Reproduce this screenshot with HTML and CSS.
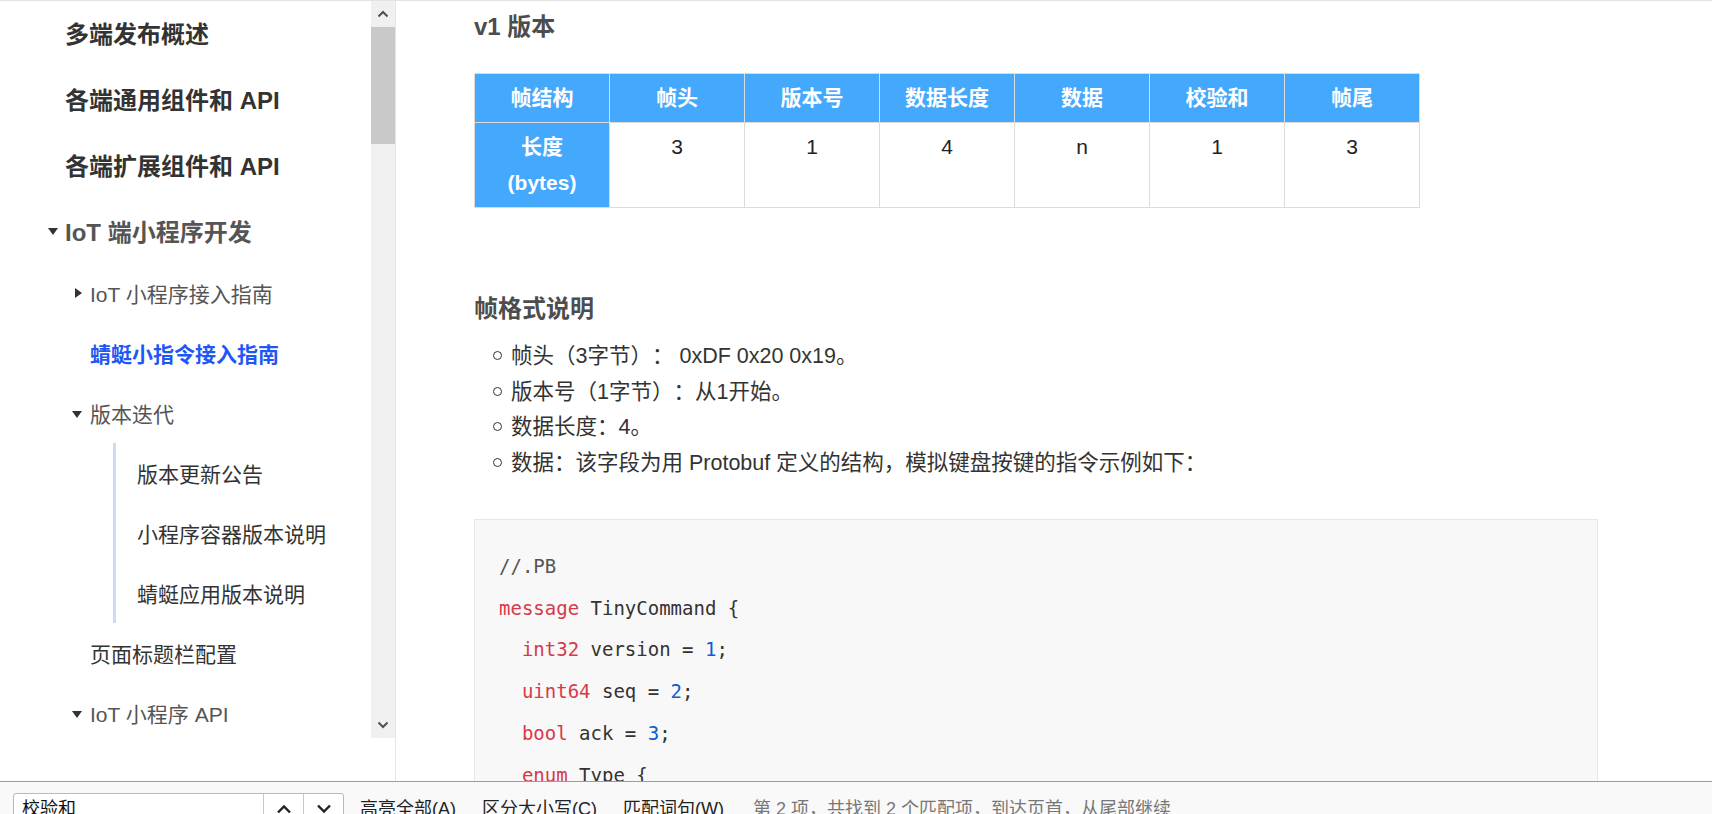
FILE: index.html
```html
<!DOCTYPE html>
<html lang="zh-CN">
<head>
<meta charset="utf-8">
<title>蜻蜓小指令接入指南</title>
<link rel="stylesheet" href="styles.css">
</head>
<body>
<div class="page">
  <div class="main">
    <aside class="sidebar">
      <div class="side-scroll">
        <nav class="nav">
          <div class="row l1"><span class="slot"></span><span class="t">多端发布概述</span></div>
          <div class="row l1"><span class="slot"></span><span class="t">各端通用组件和 API</span></div>
          <div class="row l1"><span class="slot"></span><span class="t">各端扩展组件和 API</span></div>
          <div class="row l1 open"><span class="slot"><i class="tri-down"></i></span><span class="t">IoT 端小程序开发</span></div>
          <div class="row l2"><span class="slot"><i class="tri-right"></i></span><span class="t">IoT 小程序接入指南</span></div>
          <div class="row l2 active"><span class="slot"></span><span class="t">蜻蜓小指令接入指南</span></div>
          <div class="row l2"><span class="slot"><i class="tri-down"></i></span><span class="t">版本迭代</span></div>
          <div class="group">
            <div class="row l3"><span class="t">版本更新公告</span></div>
            <div class="row l3"><span class="t">小程序容器版本说明</span></div>
            <div class="row l3"><span class="t">蜻蜓应用版本说明</span></div>
          </div>
          <div class="row l2 dark"><span class="slot"></span><span class="t">页面标题栏配置</span></div>
          <div class="row l2"><span class="slot"><i class="tri-down"></i></span><span class="t">IoT 小程序 API</span></div>
          <div class="row l2"><span class="slot"></span><span class="t">IoT 小程序组件</span></div>
        </nav>
        <div class="scrollbar">
          <div class="sb-btn">
            <svg width="12" height="8" viewBox="0 0 12 8"><polyline points="1.5,6.5 6,2 10.5,6.5" fill="none" stroke="#505050" stroke-width="2"/></svg>
          </div>
          <div class="sb-thumb"></div>
          <div class="sb-track"></div>
          <div class="sb-btn">
            <svg width="12" height="8" viewBox="0 0 12 8"><polyline points="1.5,1.5 6,6 10.5,1.5" fill="none" stroke="#505050" stroke-width="2"/></svg>
          </div>
        </div>
      </div>
    </aside>
    <main class="content">
      <h3 class="h3">v1 版本</h3>
      <table class="frame">
        <thead>
          <tr><th>帧结构</th><th>帧头</th><th>版本号</th><th>数据长度</th><th>数据</th><th>校验和</th><th>帧尾</th></tr>
        </thead>
        <tbody>
          <tr><th>长度<br>(bytes)</th><td>3</td><td>1</td><td>4</td><td>n</td><td>1</td><td>3</td></tr>
        </tbody>
      </table>
      <h3 class="h3 h3-second">帧格式说明</h3>
      <ul class="list">
        <li>帧头（3字节）： 0xDF 0x20 0x19。</li>
        <li>版本号（1字节）：从1开始。</li>
        <li>数据长度：4。</li>
        <li>数据：该字段为用 Protobuf 定义的结构，模拟键盘按键的指令示例如下：</li>
      </ul>
      <pre class="code"><code><span class="c">//.PB</span>
<span class="k">message</span> TinyCommand {
  <span class="k">int32</span> version = <span class="n">1</span>;
  <span class="k">uint64</span> seq = <span class="n">2</span>;
  <span class="k">bool</span> ack = <span class="n">3</span>;
  <span class="k">enum</span> Type {
    KEY = <span class="n">0</span>;
  }
}</code></pre>
    </main>
  </div>
  <div class="findbar">
    <div class="fb-input">
      <span class="fb-text">校验和</span>
      <span class="fb-btn">
        <svg width="16" height="10" viewBox="0 0 16 10"><polyline points="2,8.5 8,2.5 14,8.5" fill="none" stroke="#222" stroke-width="2.4"/></svg>
      </span>
      <span class="fb-btn">
        <svg width="16" height="10" viewBox="0 0 16 10"><polyline points="2,1.5 8,7.5 14,1.5" fill="none" stroke="#222" stroke-width="2.4"/></svg>
      </span>
    </div>
    <span class="fb-label first">高亮全部(A)</span>
    <span class="fb-label">区分大小写(C)</span>
    <span class="fb-label">匹配词句(W)</span>
    <span class="fb-msg">第 2 项，共找到 2 个匹配项，到达页首，从尾部继续</span>
  </div>
</div>
</body>
</html>
```

FILE: styles.css
```css
* { box-sizing: border-box; }
html, body { margin: 0; padding: 0; }
body {
  width: 1712px;
  height: 814px;
  overflow: hidden;
  background: #fff;
  font-family: "Liberation Sans", "Noto Sans CJK SC", sans-serif;
  color: #333;
  text-spacing-trim: space-all;
}
.page {
  height: 814px;
  display: flex;
  flex-direction: column;
  border-top: 1px solid #e3e3e3;
}
.main {
  height: 780px;
  display: flex;
  overflow: hidden;
}

/* sidebar */
.sidebar {
  width: 396px;
  flex: none;
  border-right: 1px solid #e6e6e6;
}
.side-scroll {
  height: 737px;
  display: flex;
  overflow: hidden;
}
.nav {
  flex: 1;
  overflow: hidden;
  margin-top: -2px;
}
.row {
  display: flex;
  align-items: center;
  white-space: nowrap;
}
.slot {
  width: 17px;
  flex: none;
  display: flex;
  align-items: center;
}
.row.l1 {
  height: 66px;
  padding-left: 48px;
  font-size: 24px;
  font-weight: bold;
  color: #333;
}
.row.l1.open { color: #555; }
.row.l2 {
  height: 60px;
  padding-left: 72px;
  font-size: 21px;
  color: #555;
}
.row.l2 .slot { width: 18px; }
.row.l2.dark { color: #333; }
.row.l2.active {
  color: #1e57f5;
  font-weight: bold;
}
.group {
  margin-left: 113px;
  border-left: 3px solid #c8ddf5;
}
.row.l3 {
  height: 60px;
  padding-left: 21px;
  font-size: 21px;
  color: #333;
}
.tri-down {
  display: block;
  width: 0; height: 0;
  border-left: 5px solid transparent;
  border-right: 5px solid transparent;
  border-top: 7px solid #333;
  margin-top: 3px;
}
.tri-right {
  display: block;
  width: 0; height: 0;
  border-top: 5px solid transparent;
  border-bottom: 5px solid transparent;
  border-left: 7px solid #333;
  margin-left: 3px;
}

.scrollbar {
  width: 24px;
  flex: none;
  background: #f0f0f0;
  display: flex;
  flex-direction: column;
}
.sb-btn {
  height: 26px;
  display: flex;
  align-items: center;
  justify-content: center;
}
.sb-thumb {
  height: 117px;
  background: #c9c9c9;
}
.sb-track { flex: 1; }

/* content */
.content {
  flex: 1;
  overflow: hidden;
  padding: 11px 114px 0 78px;
}
.h3 {
  margin: 0;
  font-size: 24px;
  line-height: 30px;
  font-weight: bold;
  color: #4d4d4d;
}
.h3-second { margin-top: 86px; }

.frame {
  margin-top: 31px;
  border-collapse: collapse;
  table-layout: fixed;
  width: 946px;
  font-size: 21px;
}
.frame th, .frame td {
  width: 135px;
  border: 1px solid #dcdcdc;
  padding: 6px 4px;
  line-height: 36px;
  text-align: center;
  vertical-align: top;
}
.frame th {
  background: #44a8fd;
  color: #fff;
  font-weight: bold;
}
.frame td {
  color: #222;
  background: #fff;
}

.list {
  margin: 15px 0 0;
  padding-left: 35px;
  list-style: none;
  font-size: 21.5px;
  line-height: 35.5px;
  color: #333;
}
.list li::before {
  content: "";
  display: inline-block;
  width: 7px;
  height: 7px;
  border: 1px solid #333;
  border-radius: 50%;
  margin-left: -16px;
  margin-right: 9px;
  vertical-align: 3px;
}

.code {
  margin: 38px 0 0;
  background: #f8f8f8;
  border: 1px solid #e6e6e6;
  padding: 26px 24px;
  font-family: "DejaVu Sans Mono", "Liberation Mono", monospace;
  font-size: 19px;
  line-height: 41.7px;
  color: #333;
  width: 1124px;
}
.code .k { color: #d73a49; }
.code .n { color: #0b5cd5; }
.code .c { color: #555; }

/* find bar */
.findbar {
  height: 33px;
  flex: none;
  border-top: 1px solid #9c9c9c;
  background: #f9f9f9;
  display: flex;
  align-items: flex-start;
  padding: 11px 0 0 13px;
  overflow: hidden;
  white-space: nowrap;
  font-size: 18px;
  text-spacing-trim: normal;
}
.fb-input {
  width: 331px;
  height: 32px;
  flex: none;
  display: flex;
  background: #fff;
  border: 1px solid #b8b8b8;
  border-radius: 3px;
}
.fb-text {
  width: 249px;
  padding-left: 8px;
  line-height: 30px;
  color: #111;
}
.fb-btn {
  width: 40px;
  border-left: 1px solid #c8c8c8;
  display: flex;
  justify-content: center;
  align-items: center;
}
.fb-label {
  margin-left: 26px;
  line-height: 32px;
  color: #222;
}
.fb-label.first { margin-left: 16px; }
.fb-msg {
  margin-left: 29px;
  line-height: 32px;
  color: #777;
}
```
